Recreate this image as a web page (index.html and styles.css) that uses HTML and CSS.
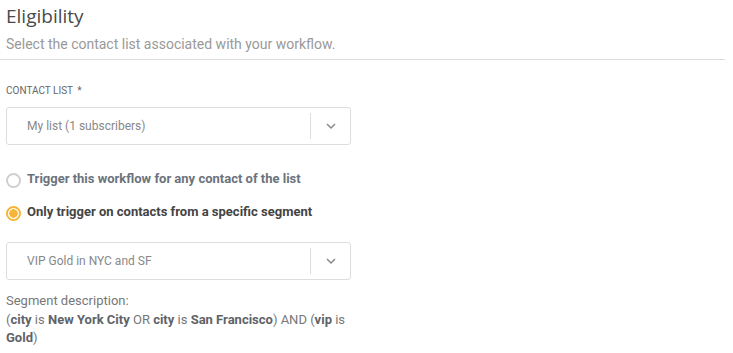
FILE: index.html
```html
<!DOCTYPE html>
<html lang="en">
<head>
    <meta charset="UTF-8">
    <title>Eligibility</title>
    <link rel="stylesheet" href="styles.css">
</head>
<body>
    <div class="header">
        <h1>Eligibility</h1>
        <p class="subtitle">Select the contact list associated with your workflow.</p>
    </div>

    <div class="form">
        <label class="field-label">Contact list <span class="req">*</span></label>
        <div class="select">
            <span class="select-value">My list (1 subscribers)</span>
            <span class="select-arrow">
                <svg width="12" height="8" viewBox="0 0 12 8"><path d="M2 2l4 4 4-4" fill="none" stroke="#888" stroke-width="1.5"/></svg>
            </span>
        </div>

        <div class="radios">
            <label class="radio">
                <span class="radio-dot"></span>
                Trigger this workflow for any contact of the list
            </label>
            <label class="radio checked">
                <span class="radio-dot"></span>
                Only trigger on contacts from a specific segment
            </label>
        </div>

        <div class="select">
            <span class="select-value">VIP Gold in NYC and SF</span>
            <span class="select-arrow">
                <svg width="12" height="8" viewBox="0 0 12 8"><path d="M2 2l4 4 4-4" fill="none" stroke="#888" stroke-width="1.5"/></svg>
            </span>
        </div>

        <p class="desc">
            Segment description:<br>
            (<b>city</b> is <b>New York City</b> OR <b>city</b> is <b>San Francisco</b>) AND (<b>vip</b> is <b>Gold</b>)
        </p>
    </div>
</body>
</html>
```

FILE: styles.css
```css
body {
    margin: 0;
    background: #fff;
    font-family: Roboto, "Liberation Sans", sans-serif;
    color: #666;
}
.header {
    margin-right: 8px;
    padding: 3px 6px 6px;
    border-bottom: 1px solid #ddd;
}
.header h1 {
    margin: 0;
    font-family: "Open Sans", "Noto Sans", sans-serif;
    font-weight: 400;
    font-size: 19px;
    line-height: 26px;
    color: #4a4a4a;
}
.subtitle {
    margin: 6px 0 0;
    font-size: 14px;
    line-height: 18px;
    color: #999;
}
.form {
    padding: 25px 6px 0;
    width: 345px;
}
.field-label {
    display: block;
    font-size: 10px;
    line-height: 12px;
    text-transform: uppercase;
    color: #666;
    margin-bottom: 10px;
}
.req {
    margin-left: 2px;
}
.select {
    display: flex;
    align-items: center;
    height: 36px;
    border: 1px solid #ddd;
    border-radius: 3px;
}
.select-value {
    flex: 1;
    padding-left: 20px;
    font-size: 12px;
    color: #888;
}
.select-arrow {
    display: flex;
    align-items: center;
    justify-content: center;
    width: 39px;
    height: 26px;
    border-left: 1px solid #ddd;
}
.radios {
    display: flex;
    flex-direction: column;
    gap: 15px;
    padding: 25px 0 21px;
}
.radio {
    display: flex;
    align-items: center;
    gap: 6px;
    font-size: 13px;
    font-weight: 700;
    color: #6b737c;
    line-height: 16px;
}
.radio-dot {
    box-sizing: border-box;
    width: 15px;
    height: 15px;
    border: 2px solid #cfcfcf;
    border-radius: 50%;
    margin-top: 3px;
}
.radio.checked {
    color: #444;
}
.radio.checked .radio-dot {
    border-color: #f7b538;
    background: radial-gradient(circle, #f7b538 0 4px, #fff 4.5px);
}
.desc {
    margin: 12px 0 0;
    font-size: 13px;
    line-height: 18.5px;
    color: #777;
}
.desc b {
    color: #5f6368;
}
```
